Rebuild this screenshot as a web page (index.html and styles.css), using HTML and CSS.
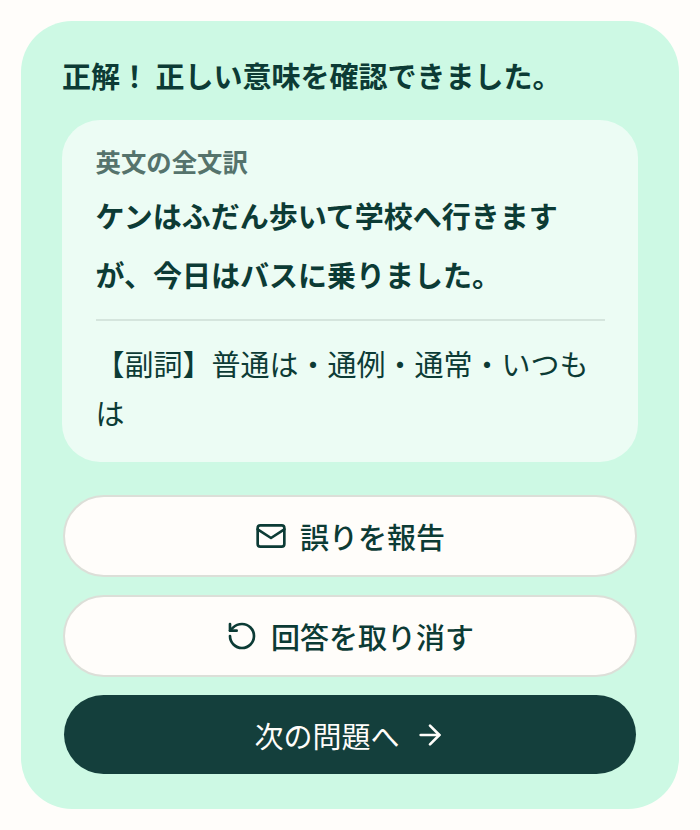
FILE: index.html
```html
<!DOCTYPE html>
<html lang="ja">
<head>
  <meta charset="UTF-8">
  <meta name="viewport" content="width=device-width, initial-scale=1.0">
  <title>正解</title>
  <link rel="stylesheet" href="styles.css">
</head>
<body>

  <div class="result-card">
    <p class="result-title">正解！ 正しい意味を確認できました。</p>

    <!-- Translation -->
    <div class="translation">
      <p class="translation-label">英文の全文訳</p>
      <p class="translation-text">ケンはふだん歩いて学校へ行きますが、今日はバスに乗りました。</p>
      <p class="translation-meaning">【副詞】普通は・通例・通常・いつもは</p>
    </div>

    <!-- Actions -->
    <div class="actions">
      <button class="btn">
        <svg class="icon" viewBox="0 0 24 24" fill="none" stroke="currentColor" stroke-width="2" stroke-linecap="round" stroke-linejoin="round">
          <rect x="2" y="4" width="20" height="16" rx="2"></rect>
          <path d="M2 7l10 6.5L22 7"></path>
        </svg>
        誤りを報告
      </button>
      <button class="btn">
        <svg class="icon" viewBox="0 0 24 24" fill="none" stroke="currentColor" stroke-width="2" stroke-linecap="round" stroke-linejoin="round">
          <path d="M3 12a9 9 0 1 0 9-9 9.75 9.75 0 0 0-6.74 2.74L3 8"></path>
          <path d="M3 3v5h5"></path>
        </svg>
        回答を取り消す
      </button>
      <button class="btn btn-primary">
        次の問題へ
        <svg class="icon" viewBox="0 0 24 24" fill="none" stroke="currentColor" stroke-width="2" stroke-linecap="round" stroke-linejoin="round">
          <path d="M5 12h14"></path>
          <path d="M12 5l7 7-7 7"></path>
        </svg>
      </button>
    </div>
  </div>

</body>
</html>
```

FILE: styles.css
```css
* {
  margin: 0;
  padding: 0;
  box-sizing: border-box;
  font-family: "Noto Sans CJK JP", "Noto Sans", sans-serif;
}

body {
  background: #fffdfa;
  color: #0c3b35;
  padding: 21px;
}

.result-card {
  height: 788px;
  background: #cdf9e4;
  border-radius: 51px;
  padding: 36px 41px 35px;
}

.result-title {
  font-size: 29px;
  font-weight: 700;
  line-height: 36px;
  margin-bottom: 27px;
}

.translation {
  background: #ecfcf4;
  border-radius: 38px;
  padding: 24px 33px 25px 34px;
  margin-bottom: 33px;
}

.translation-label {
  font-size: 25.4px;
  font-weight: 700;
  line-height: 34px;
  color: #55736c;
  margin-left: -0.5px;
}

.translation-text {
  font-size: 29px;
  font-weight: 700;
  line-height: 59px;
  margin-top: 8px;
  margin-left: -0.5px;
  padding-bottom: 15px;
  border-bottom: 2px solid #d5e5dd;
}

.translation-meaning {
  font-size: 29px;
  line-height: 49px;
  margin-top: 18px;
  margin-left: -0.5px;
}

.actions {
  display: flex;
  flex-direction: column;
  gap: 18px;
  padding: 0 1px;
}

.btn {
  height: 82px;
  display: flex;
  align-items: center;
  justify-content: center;
  gap: 13px;
  background: #fffdfa;
  border: 2px solid #dcdfd8;
  border-radius: 41px;
  color: #0c3b35;
  font-size: 29px;
  font-weight: 500;
}

.btn-primary {
  height: 79px;
  margin: 0 1px;
  background: #143f3c;
  border: none;
  color: #fffdfa;
  font-weight: 400;
  gap: 14px;
}

.icon {
  width: 32px;
  height: 32px;
  flex-shrink: 0;
}
```
